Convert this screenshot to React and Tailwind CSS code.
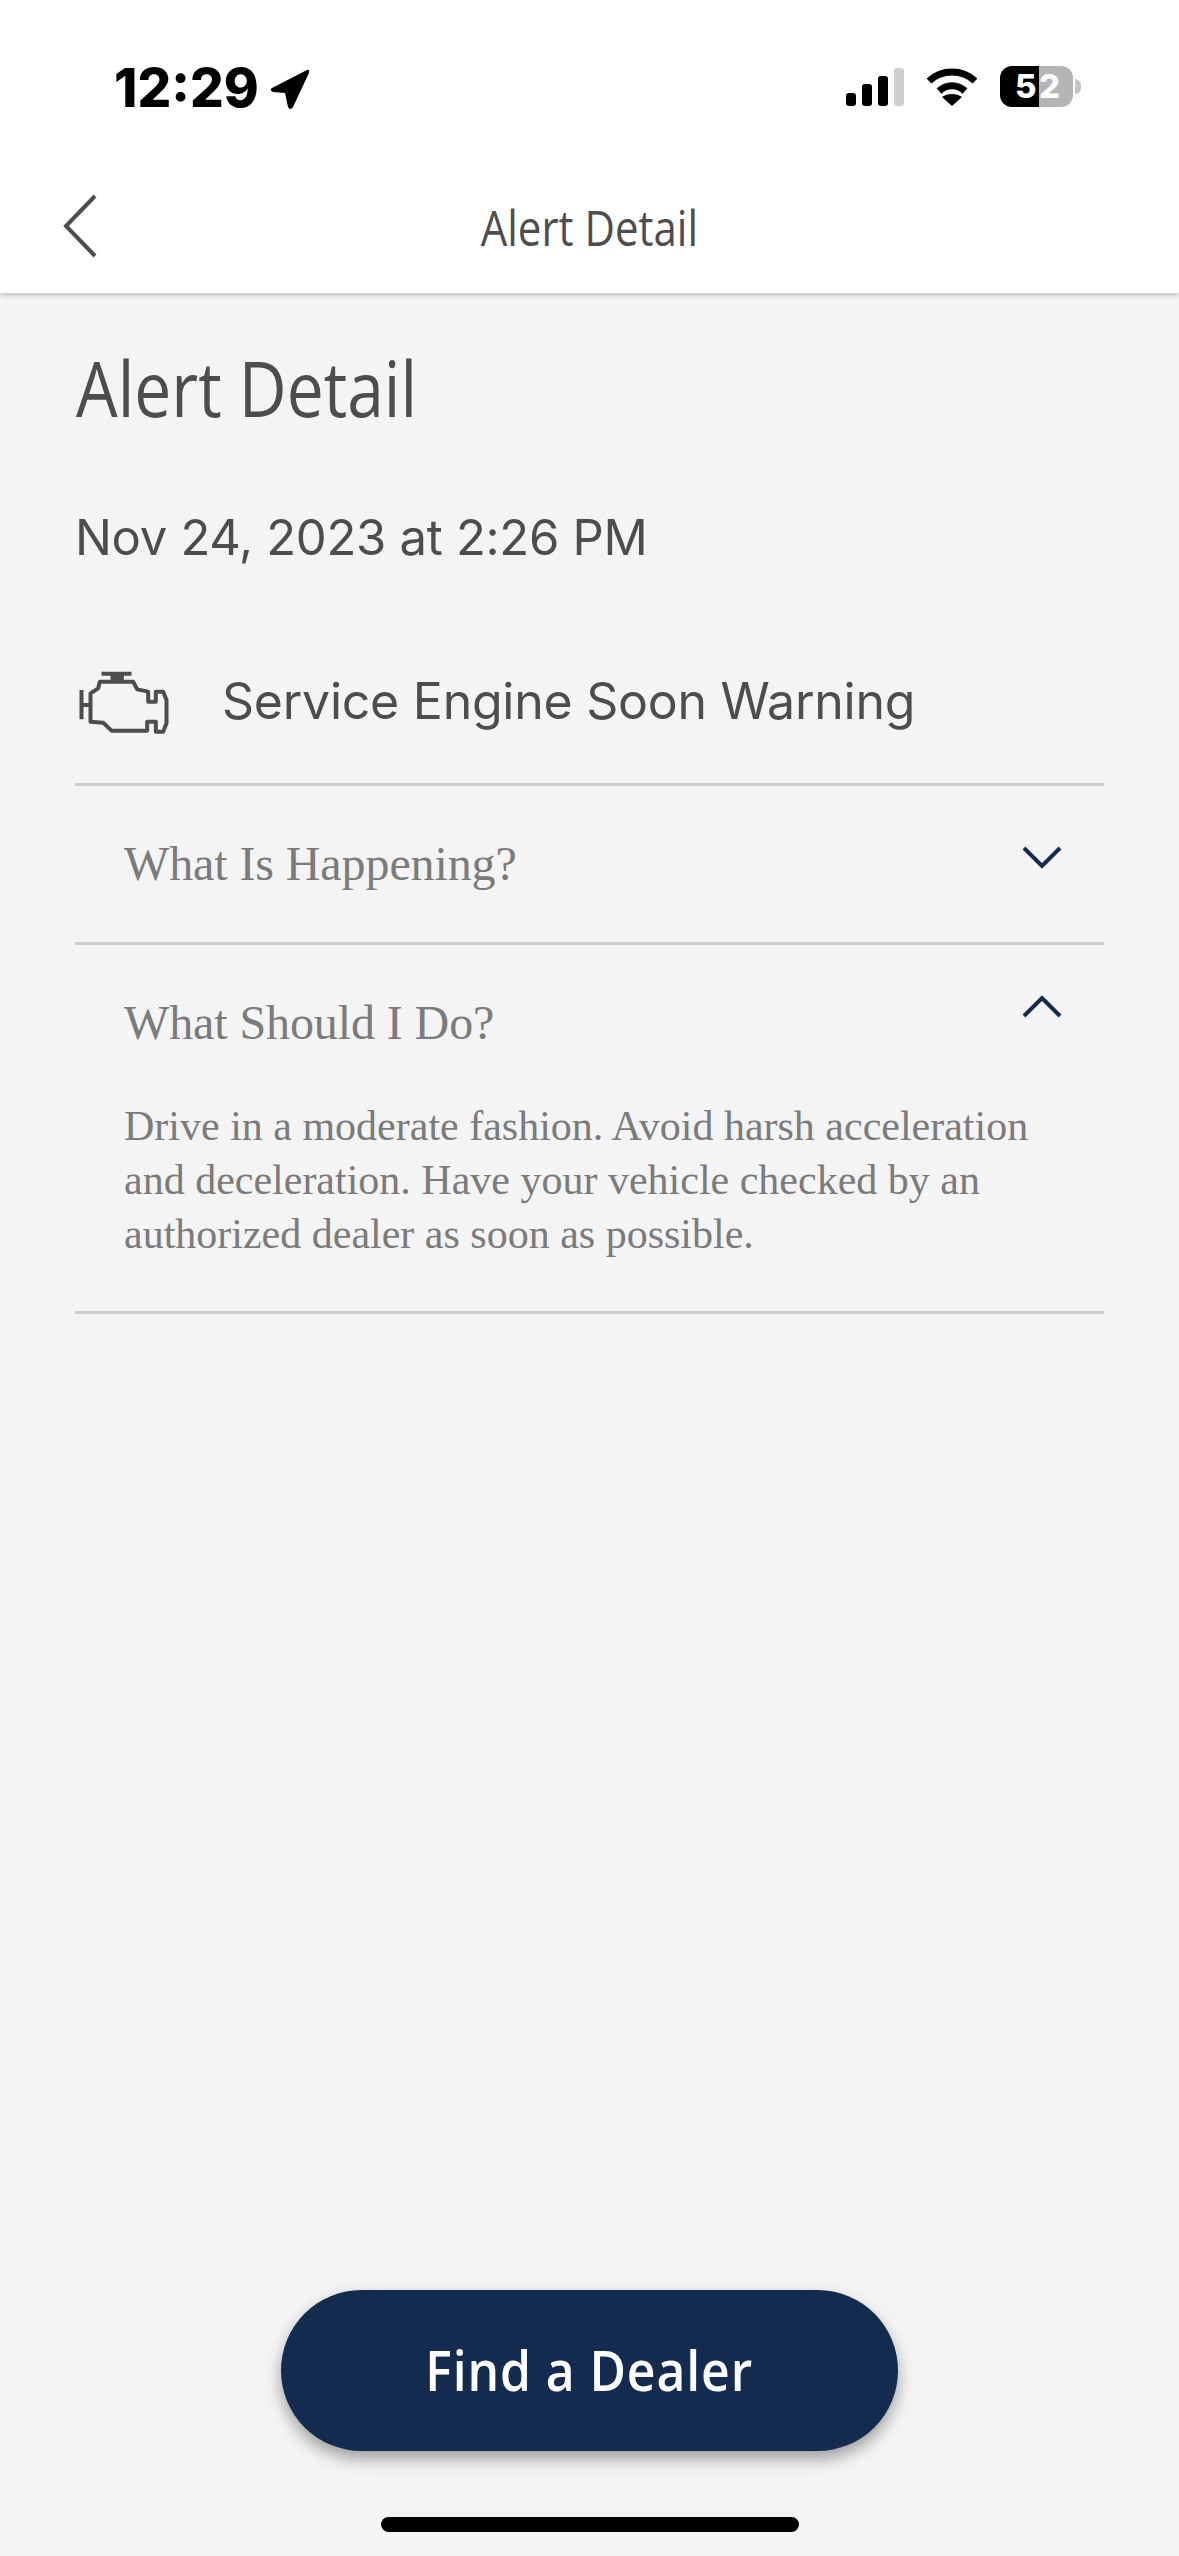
export default function App() {
  return (
    <div className="flex h-[2556px] w-[1179px] flex-col overflow-hidden bg-[#f4f4f4]">
      <header className="relative z-10 h-[293px] shrink-0 bg-white shadow-[0_3px_5px_rgba(0,0,0,0.18)]">
        <div className="flex h-[150px] items-start justify-between pl-[114px] pr-[98px] pt-[60px]">
          <div className="flex items-center gap-[9px]">
            <span className="font-['Inter',sans-serif] text-[53px] font-extrabold leading-[56px] text-black">12:29</span>
            <svg width="44" height="44" viewBox="0 0 44 44" className="mt-[2px]">
              <path d="M4 21 L39 3 Q42 2 41 6 L25 40 Q22 44 20 40 L17 26 L5 25 Q1 23 4 21 Z" fill="#000" />
            </svg>
          </div>
          <div className="flex items-center pt-[6px]">
            <svg width="58" height="38" viewBox="0 0 58 38">
              <rect x="0" y="25" width="10" height="13" rx="3" fill="#000" />
              <rect x="16" y="16" width="10" height="22" rx="3" fill="#000" />
              <rect x="32" y="8" width="10" height="30" rx="3" fill="#000" />
              <rect x="48" y="0" width="10" height="38" rx="3" fill="#cfcfcf" />
            </svg>
            <svg width="52" height="38" viewBox="0 0 52 38" className="ml-[22px]">
              <path d="M3 13 C16 1 36 1 49 13" fill="none" stroke="#000" strokeWidth="7" />
              <path d="M13 23 C21 16 31 16 39 23" fill="none" stroke="#000" strokeWidth="7" />
              <path d="M26 38 L16 29 C22 25 30 25 36 29 Z" fill="#000" />
            </svg>
            <div className="ml-[22px] flex h-[41px] w-[73px] overflow-hidden rounded-[12px] font-['Inter',sans-serif] text-[33px] font-extrabold leading-[41px] text-white">
              <div className="w-[39px] bg-black pl-[15px]">5</div>
              <div className="flex-1 bg-[#b5b5b5]">2</div>
            </div>
            <div className="ml-[2px] h-[15px] w-[6px] rounded-r-[6px] bg-[#c4c4c4]" />
          </div>
        </div>
        <div className="relative flex h-[143px] items-start justify-center">
          <svg width="36" height="66" viewBox="0 0 36 66" className="absolute left-[62px] top-[43px]">
            <path d="M33 3 L4 33 L33 63" fill="none" stroke="#4d4d4d" strokeWidth="4" />
          </svg>
          <span className="mt-[43px] inline-block origin-center scale-x-[0.84] font-['Open_Sans',sans-serif] text-[50px] leading-[68px] text-[#4d4d4d]">Alert Detail</span>
        </div>
      </header>

      <main className="flex min-h-0 flex-1 flex-col px-[75px]">
        <h1 className="ml-[1px] mt-[45px] origin-left scale-x-[0.867] font-['Open_Sans',sans-serif] text-[76px] font-normal leading-[100px] text-[#4d4d4d]">Alert Detail</h1>
        <p className="mt-[67px] font-['Inter',sans-serif] text-[49px] leading-[66px] tracking-[-0.3px] text-[#4d4d4d]">Nov 24, 2023 at 2:26 PM</p>
        <div className="mt-[97px] flex h-[118px] items-start border-b-[3px] border-[#cdcdcd]">
          <svg width="92" height="65" viewBox="85 90 275 195" className="ml-[3px] mt-[2px] shrink-0">
            <path d="M150 125 L250 125 L262 148 L295 155 L295 185 L318 185 L318 155 L340 155 L350 180 L350 250 L340 275 L318 275 L318 245 L292 245 L292 272 L185 272 L160 248 L122 245 L122 160 L145 145 Z" fill="none" stroke="#4d4d4d" strokeWidth="12" strokeLinejoin="round" />
            <path d="M155 101 L245 101 M202 101 L202 125 M95 150 L95 238 M95 195 L122 195" fill="none" stroke="#4d4d4d" strokeWidth="12" />
            <path d="M182 101 H222 V125 H182 Z" fill="#4d4d4d" />
          </svg>
          <span className="ml-[52px] font-['Inter',sans-serif] text-[50px] leading-[66px] tracking-[-0.25px] text-[#4d4d4d]">Service Engine Soon Warning</span>
        </div>
        <div className="flex h-[159px] items-start justify-between border-b-[3px] border-[#cdcdcd] pl-[49px] pr-[42px]">
          <span className="mt-[51px] font-['Liberation_Serif',serif] text-[48px] leading-[54px] tracking-[-0.1px] text-[#7b7b7b]">What Is Happening?</span>
          <svg width="40" height="24" viewBox="0 0 40 24" className="mt-[60px]">
            <path d="M2 2 L20 20 L38 2" fill="none" stroke="#122b4f" strokeWidth="4" />
          </svg>
        </div>
        <div className="flex h-[369px] flex-col border-b-[3px] border-[#cdcdcd] pl-[49px] pr-[42px]">
          <div className="flex items-start justify-between">
            <span className="mt-[51px] font-['Liberation_Serif',serif] text-[48px] leading-[54px] tracking-[-0.1px] text-[#7b7b7b]">What Should I Do?</span>
            <svg width="40" height="24" viewBox="0 0 40 24" className="mt-[49px]">
              <path d="M2 22 L20 4 L38 22" fill="none" stroke="#122b4f" strokeWidth="4" />
            </svg>
          </div>
          <p className="mt-[49px] font-['Liberation_Serif',serif] text-[42px] leading-[54px] text-[#7b7b7b]">
            Drive in a moderate fashion. Avoid harsh acceleration<br />and deceleration. Have your vehicle checked by an<br />authorized dealer as soon as possible.
          </p>
        </div>
        <button className="mx-auto mb-[66px] mt-auto flex h-[161px] w-[617px] items-center justify-center rounded-full bg-[#122b4f] shadow-[0_8px_16px_rgba(0,0,0,0.35)]">
          <span className="-mt-[4px] inline-block scale-x-[0.89] font-['Open_Sans',sans-serif] text-[56px] font-semibold tracking-[1px] text-white">Find a Dealer</span>
        </button>
        <div className="mx-auto mb-[24px] h-[15px] w-[418px] shrink-0 rounded-full bg-black" />
      </main>
    </div>
  );
}
